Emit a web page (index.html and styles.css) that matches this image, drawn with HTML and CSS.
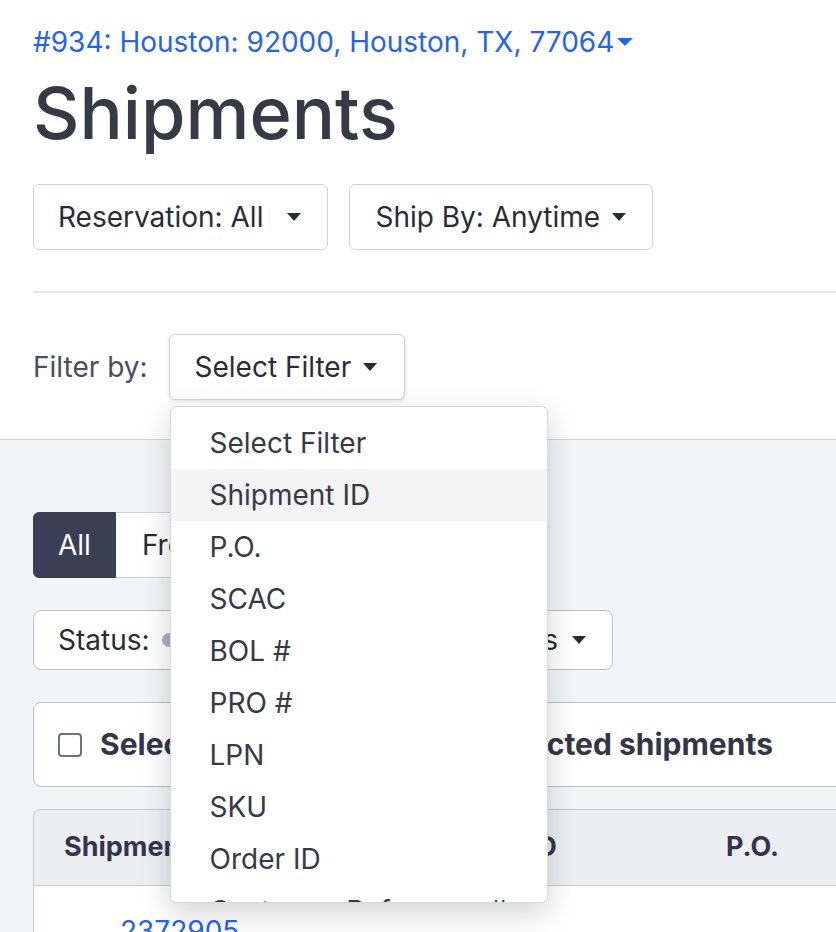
FILE: index.html
```html
<!DOCTYPE html>
<html lang="en">
<head>
    <meta charset="UTF-8">
    <meta name="viewport" content="width=device-width, initial-scale=1.0">
    <title>Shipments</title>
    <link rel="stylesheet" href="styles.css">
</head>
<body>
    <div class="top">
        <a class="store-link" href="#">#934: Houston: 92000, Houston, TX, 77064<span class="caret"></span></a>
        <h1 class="page-title">Shipments</h1>
        <div class="toolbar">
            <button class="btn btn-reservation">Reservation: All<span class="caret"></span></button>
            <button class="btn">Ship By: Anytime<span class="caret"></span></button>
        </div>
        <hr class="divider">
        <div class="filter-row">
            <span class="filter-label">Filter by:</span>
            <div class="filter-select">
                <button class="btn btn-raised">Select Filter<span class="caret"></span></button>
                <ul class="menu">
                    <li>Select Filter</li>
                    <li class="active">Shipment ID</li>
                    <li>P.O.</li>
                    <li>SCAC</li>
                    <li>BOL #</li>
                    <li>PRO #</li>
                    <li>LPN</li>
                    <li>SKU</li>
                    <li>Order ID</li>
                    <li>Customer Reference #</li>
                    <li>Tracking #</li>
                </ul>
            </div>
        </div>
    </div>

    <div class="content">
        <div class="segmented">
            <button class="seg seg-on">All</button>
            <button class="seg">Freight</button>
            <button class="seg seg-last">Parcel</button>
        </div>

        <button class="btn status-btn">
            <span>Status:</span>
            <span class="status-dot"></span>
            <span class="status-value">All Statuses</span>
            <span class="caret"></span>
        </button>

        <div class="select-card">
            <span class="checkbox"></span>
            <div class="select-text">
                <span>Select all</span>
                <span>0 selected shipments</span>
            </div>
        </div>

        <div class="table">
            <div class="table-head">
                <div class="cell">Shipment ID</div>
                <div class="cell">Order ID</div>
                <div class="cell">P.O.</div>
            </div>
            <div class="table-row">
                <a class="cell-link" href="#">2372905</a>
            </div>
        </div>
    </div>
</body>
</html>
```

FILE: styles.css
```css
body {
    margin: 0;
    font-family: Inter, "Noto Sans", sans-serif;
    font-size: 28px;
    line-height: 1.5;
    color: #2c2e38;
    background: #fff;
    overflow: hidden;
}

.caret {
    display: inline-block;
    width: 0;
    height: 0;
    border-left: 7px solid transparent;
    border-right: 7px solid transparent;
    border-top: 8px solid currentColor;
    margin-left: 12px;
}

.top {
    padding: 21px 0 39px 33px;
}

.store-link {
    color: #2563eb;
    text-decoration: none;
    display: inline-flex;
    align-items: center;
}

.store-link .caret {
    margin-left: 3px;
    border-left-width: 8px;
    border-right-width: 8px;
}

.page-title {
    font-size: 72px;
    font-weight: 500;
    line-height: 1.2;
    color: #363946;
    margin: 7px 0 28px;
}

.toolbar {
    display: flex;
    gap: 21px;
}

.btn {
    font: inherit;
    color: #2a2c35;
    background: #fff;
    border: 1px solid #d2d3d8;
    border-radius: 6px;
    padding: 11px 26px 11px 25px;
    display: inline-flex;
    align-items: center;
}

.btn-reservation {
    padding-left: 24px;
}

.btn-reservation .caret {
    margin-left: 24px;
}

.btn-raised {
    padding-right: 27px;
    box-shadow: 0 1px 4px rgba(0, 0, 0, 0.12);
}

.divider {
    border: 0;
    height: 2px;
    background: #e5e7eb;
    margin: 41px 0 0;
}

.filter-row {
    display: flex;
    align-items: center;
    gap: 21px;
    margin-top: 41px;
}

.filter-label {
    color: #4a4e5c;
}

.filter-select {
    position: relative;
}

/* open dropdown, sits over the list below */
.menu {
    position: absolute;
    top: 72px;
    left: 1px;
    z-index: 10;
    width: 378px;
    height: 497px;
    box-sizing: border-box;
    overflow: hidden;
    margin: 0;
    padding: 10px 0;
    list-style: none;
    background: #fff;
    border: 1px solid #d6d8dd;
    border-radius: 6px;
    box-shadow: 0 10px 30px rgba(0, 0, 0, 0.18);
}

.menu li {
    padding: 5px 39px;
    color: #363946;
    white-space: nowrap;
}

.menu .active {
    background: #f4f4f5;
}

.content {
    background: #f3f4f6;
    border-top: 1px solid #cdd4de;
    padding: 72px 0 0 33px;
}

.segmented {
    display: flex;
    margin-bottom: 32px;
}

.seg {
    font: inherit;
    color: #2a2c35;
    background: #fff;
    border: 1px solid #cfd2d8;
    border-left: 0;
    padding: 11px 26px;
}

.seg-on {
    background: #3a3f55;
    border: 1px solid #3a3f55;
    color: #fff;
    border-radius: 6px 0 0 6px;
    padding: 11px 24px;
}

.seg-last {
    border-radius: 0 6px 6px 0;
}

.status-btn {
    width: 580px;
    box-sizing: border-box;
    border-color: #b8c0cd;
    border-radius: 8px;
    padding: 8px 26px 8px 24px;
}

.status-dot {
    width: 14px;
    height: 14px;
    border-radius: 50%;
    background: #aab2c0;
    margin-left: 12px;
}

.status-value {
    flex: 1;
    text-align: right;
}

.status-btn .caret {
    margin-left: 14px;
}

.select-card {
    margin-top: 32px;
    width: 1100px;
    box-sizing: border-box;
    border: 1px solid #b8c0cd;
    border-radius: 8px;
    background: #fff;
    padding: 19px 24px;
    display: flex;
    align-items: center;
    font-size: 30px;
    font-weight: 700;
    color: #33364a;
}

.checkbox {
    width: 24px;
    height: 24px;
    box-sizing: border-box;
    border: 2px solid #6b7280;
    border-radius: 4px;
    background: #fff;
    margin-right: 18px;
}

.select-text {
    width: 673px;
    display: flex;
    justify-content: space-between;
}

.table {
    margin-top: 22px;
    width: 1100px;
    border: 1px solid #c5ccd8;
    border-bottom: 0;
    border-radius: 8px 8px 0 0;
    background: #fff;
    overflow: hidden;
}

.table-head {
    display: grid;
    grid-template-columns: 384px 278px 1fr;
    background: #eceef2;
    border-bottom: 1px solid #c5ccd8;
    font-size: 27px;
    font-weight: 700;
    color: #33364a;
}

.cell {
    padding: 17px 0 17px 30px;
}

.table-row {
    padding: 24px 0 40px 86px;
}

.cell-link {
    color: #2563eb;
    text-decoration: none;
}
```
